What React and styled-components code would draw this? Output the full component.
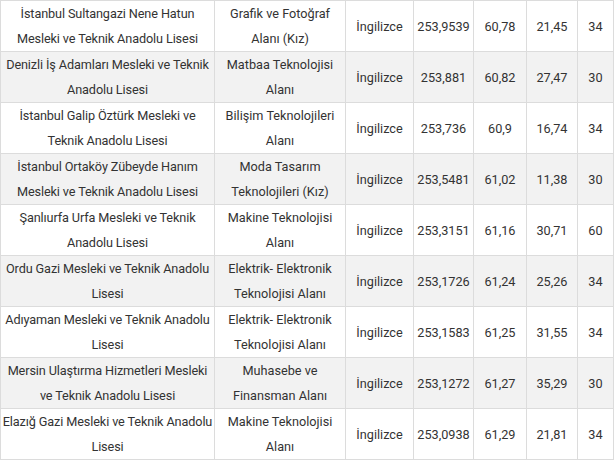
import styled, { createGlobalStyle } from "styled-components"

const rows = [
    ["İstanbul Sultangazi Nene Hatun Mesleki ve Teknik Anadolu Lisesi", "Grafik ve Fotoğraf Alanı (Kız)", "İngilizce", "253,9539", "60,78", "21,45", "34"],
    ["Denizli İş Adamları Mesleki ve Teknik Anadolu Lisesi", "Matbaa Teknolojisi Alanı", "İngilizce", "253,881", "60,82", "27,47", "30"],
    ["İstanbul Galip Öztürk Mesleki ve Teknik Anadolu Lisesi", "Bilişim Teknolojileri Alanı", "İngilizce", "253,736", "60,9", "16,74", "34"],
    ["İstanbul Ortaköy Zübeyde Hanım Mesleki ve Teknik Anadolu Lisesi", "Moda Tasarım Teknolojileri (Kız)", "İngilizce", "253,5481", "61,02", "11,38", "30"],
    ["Şanlıurfa Urfa Mesleki ve Teknik Anadolu Lisesi", "Makine Teknolojisi Alanı", "İngilizce", "253,3151", "61,16", "30,71", "60"],
    ["Ordu Gazi Mesleki ve Teknik Anadolu Lisesi", "Elektrik- Elektronik Teknolojisi Alanı", "İngilizce", "253,1726", "61,24", "25,26", "34"],
    ["Adıyaman Mesleki ve Teknik Anadolu Lisesi", "Elektrik- Elektronik Teknolojisi Alanı", "İngilizce", "253,1583", "61,25", "31,55", "34"],
    ["Mersin Ulaştırma Hizmetleri Mesleki ve Teknik Anadolu Lisesi", "Muhasebe ve Finansman Alanı", "İngilizce", "253,1272", "61,27", "35,29", "30"],
    ["Elazığ Gazi Mesleki ve Teknik Anadolu Lisesi", "Makine Teknolojisi Alanı", "İngilizce", "253,0938", "61,29", "21,81", "34"],
]

const widths = [214, 131, 68, 60, 53, 51, 36]

const GlobalStyle = createGlobalStyle`
    body {
        margin: 0;
        background: #fff;
        font-family: Roboto, "Liberation Sans", sans-serif;
    }
`

const Table = styled.table`
    border-collapse: collapse;
    table-layout: fixed;
    width: 613px;
    color: #333;
    font-size: 12.7px;
`

const Row = styled.tr`
    background: ${(p) => (p.$shaded ? "#f2f2f2" : "#fff")};
`

const Cell = styled.td`
    border: 1px solid #dcdcdc;
    height: 50px;
    padding: 0 1px;
    line-height: 25px;
    text-align: center;
    vertical-align: middle;
    letter-spacing: ${(p) => (p.$tight ? "-0.12px" : "normal")};
`

export default function App() {
    return (
        <>
            <GlobalStyle />
            <Table>
                <colgroup>
                    {widths.map((w, i) => <col key={i} style={{ width: w }} />)}
                </colgroup>
                <tbody>
                    {rows.map((r, i) => (
                        <Row key={i} $shaded={i % 2 === 1}>
                            {r.map((c, j) => <Cell key={j} $tight={j === 0}>{c}</Cell>)}
                        </Row>
                    ))}
                </tbody>
            </Table>
        </>
    )
}
